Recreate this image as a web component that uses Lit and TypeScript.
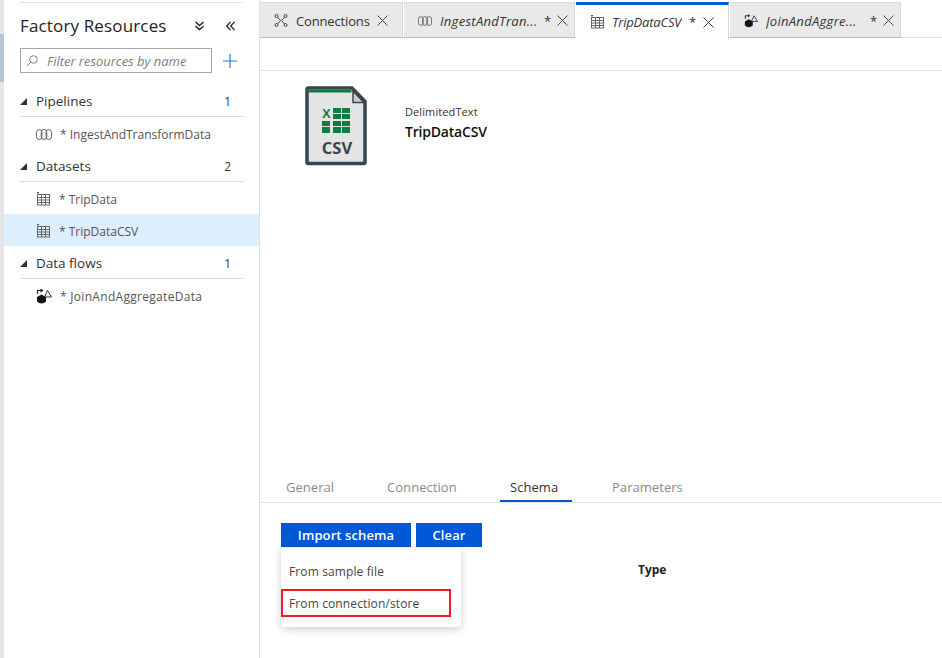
import { LitElement, html, css, svg } from 'lit';
import { customElement } from 'lit/decorators.js';

const pipelineIcon = (w = 16, h = 11) => svg`
  <svg class="icon" width=${w} height=${h} viewBox="0 0 16 11" fill="none" stroke="#666" stroke-width="1">
    <rect x="0.5" y="0.5" width="5.5" height="10" rx="2.750"/>
    <rect x="5.200" y="0.5" width="5.600" height="10" rx="2.750"/>
    <rect x="10" y="0.5" width="5.500" height="10" rx="2.750"/>
  </svg>`;

const tableIcon = () => svg`
  <svg class="icon" width="15" height="14" viewBox="0 0 15 14" fill="none" stroke="#666" stroke-width="1">
    <path d="M1 0.5h2M2 0v1.500" stroke="#555"/>
    <rect x="1.500" y="2.500" width="12" height="10.500"/>
    <path d="M1.500 5.500h12M1.500 8h12M1.500 10.500h12M5.500 2.500v10.500M9.500 2.500v10.500"/>
  </svg>`;

const flowIcon = (w = 16, h = 15) => svg`
  <svg class="icon" width=${w} height=${h} viewBox="0 0 16 15">
    <path d="M1 8 5.500 5.500 10 8V12.500Q5.500 16.500 1 12.500Z" fill="#111"/>
    <path d="M1.500 5V1.500H6M4.500 0 6.500 1.500 4.500 3" fill="none" stroke="#222" stroke-width="1.100"/>
    <path d="M11.500 1.500 15.500 8H8.500z" fill="none" stroke="#333" stroke-width="1"/>
  </svg>`;

const connectionsIcon = () => svg`
  <svg class="icon" width="14" height="13" viewBox="0 0 14 13" fill="none" stroke="#444" stroke-width="1">
    <circle cx="2.500" cy="2" r="1.500"/><circle cx="11.500" cy="2" r="1.500"/>
    <circle cx="2.500" cy="11" r="1.500"/><circle cx="11.500" cy="11" r="1.500"/>
    <path d="M3.700 3.200 6.500 6.500 3.700 9.800M10.300 3.200 7.500 6.500 10.300 9.800"/>
  </svg>`;

const closeIcon = () => svg`
  <svg class="close" width="11" height="11" viewBox="0 0 11 11" fill="none" stroke="#444" stroke-width="1">
    <path d="M0.500 0.500 10.500 10.500M10.500 0.500 0.500 10.500"/>
  </svg>`;

const csvIcon = () => svg`
  <svg width="62" height="80" viewBox="0 0 62 80">
    <path d="M3.500 2H47L60 15.500V76a1.500 1.500 0 0 1-1.500 1.500H3.500A1.500 1.500 0 0 1 2 76V3.500A1.500 1.500 0 0 1 3.500 2z" fill="#e4e4e4" stroke="#3a444e" stroke-width="3.500"/>
    <rect x="3.500" y="4" width="43" height="2.500" fill="#0f7b3f"/>
    <path d="M48 5V16.500H59z" fill="#c9cdd1" stroke="#3a444e" stroke-width="1.500"/>
    <text x="17" y="32" font-family="Liberation Sans" font-weight="700" font-size="13" fill="#107c41">X</text>
    <g fill="#107c41">
      <rect x="28" y="22" width="8" height="5"/><rect x="37" y="22" width="8" height="5"/>
      <rect x="28" y="28" width="8" height="5"/><rect x="37" y="28" width="8" height="5"/>
      <rect x="17" y="35" width="8" height="5"/><rect x="28" y="35" width="8" height="5"/><rect x="37" y="35" width="8" height="5"/>
      <rect x="17" y="41" width="8" height="6"/><rect x="28" y="41" width="8" height="6"/><rect x="37" y="41" width="8" height="6"/>
    </g>
    <text x="32" y="68" text-anchor="middle" font-family="Open Sans" font-weight="700" font-size="16.500" fill="#3a444e">CSV</text>
  </svg>`;

@customElement('app-root')
export class AppRoot extends LitElement {
  static styles = css`
    :host {
      display: flex;
      height: 658px;
      width: 942px;
      overflow: hidden;
      background: #fff;
      color: #333;
      font-family: "Open Sans", "Noto Sans", sans-serif;
      font-size: 12px;
    }
    .rail {
      width: 4px;
      flex: none;
      background: #e5e3e4;
      padding-top: 34px;
      box-sizing: border-box;
    }
    .rail div {
      height: 48px;
      background: #b5c5d3;
    }
    .side {
      width: 256px;
      flex: none;
      box-sizing: border-box;
      border-right: 1px solid #e1e1e1;
    }
    .side-head {
      margin: 2px 16px 0;
      border-top: 1px solid #e1e1e1;
      height: 46px;
      display: flex;
      align-items: center;
      justify-content: space-between;
      box-sizing: border-box;
      padding-right: 8px;
    }
    .title {
      font-size: 17px;
      color: #222;
      letter-spacing: 0.15px;
    }
    .head-icons {
      display: flex;
      gap: 22px;
    }
    .filter-row {
      display: flex;
      align-items: center;
      margin: 0 16px;
      gap: 11px;
    }
    .filter {
      width: 192px;
      height: 25px;
      box-sizing: border-box;
      border: 1px solid #a6a6a6;
      display: flex;
      align-items: center;
      gap: 9px;
      padding-left: 5px;
      font-style: italic;
      color: #808080;
      font-size: 13px;
      letter-spacing: -0.03px;
    }
    .group {
      margin: 0 16px;
      height: 33px;
      box-sizing: border-box;
      border-bottom: 1px solid #dcdcdc;
      display: flex;
      align-items: center;
      gap: 9px;
      font-weight: 500;
      font-size: 13.500px;
      color: #333;
      padding: 2px 12px 0 0;
    }
    .group .count {
      margin-left: auto;
      font-weight: 400;
      font-size: 12px;
    }
    .tri {
      width: 0;
      height: 0;
      border-left: 7px solid transparent;
      border-bottom: 7px solid #333;
    }
    .item {
      height: 32px;
      box-sizing: border-box;
      display: flex;
      align-items: center;
      padding: 2px 0 0 32px;
      color: #555;
    }
    .item.sel {
      background: #dcefff;
    }
    .item.wide {
      letter-spacing: 0.3px;
    }
    .item .icon {
      flex: none;
      margin-right: 8px;
    }
    .first-group {
      margin-top: 11px;
    }
    .main {
      flex: 1;
      display: flex;
      flex-direction: column;
      min-width: 0;
    }
    .tabs {
      height: 38px;
      box-sizing: border-box;
      padding-top: 2px;
      display: flex;
      border-bottom: 1px solid #dedede;
    }
    .tab {
      box-sizing: border-box;
      height: 36px;
      background: #e9e9e9;
      border-top: 1px solid #dcdcdc;
      border-right: 1px solid #d6d6d6;
      border-bottom: 1px solid #bdbdbd;
      margin-right: 1px;
      display: flex;
      align-items: center;
      padding: 1px 6px 0 14px;
      gap: 6px;
      white-space: nowrap;
      color: #333;
      font-size: 13px;
      letter-spacing: -0.15px;
    }
    .tab .icon {
      flex: none;
      margin-right: 2px;
    }
    .tab i {
      font-style: italic;
      overflow: hidden;
      flex: 1;
      letter-spacing: 0.3px;
    }
    .tab .close {
      flex: none;
      margin-left: auto;
    }
    .tab.active {
      background: #fff;
      border-top: 3px solid #0058d6;
      border-bottom: none;
      height: 37px;
      padding: 0 14px 0 14px;
      gap: 7px;
    }
    .tab.active .icon {
      margin-right: 0;
    }
    .tab.active i {
      letter-spacing: -0.2px;
    }
    .t1 { width: 143px; padding-right: 14px; }
    .t2 { width: 171px; }
    .t3 { width: 153px; }
    .t4 { width: 171px; }
    .toolbar {
      height: 33px;
      flex: none;
      box-sizing: border-box;
      border-bottom: 1px solid #e1e1e1;
    }
    .info {
      display: flex;
      padding: 15px 0 0 45px;
      gap: 38px;
      flex: 1;
    }
    .info-text {
      padding-top: 18px;
      display: flex;
      flex-direction: column;
      gap: 3px;
      color: #333;
      font-size: 11px;
      letter-spacing: 0.1px;
    }
    .info-text b {
      font-size: 14px;
      color: #111;
      font-weight: 600;
      letter-spacing: -0.2px;
    }
    .sub-tabs {
      height: 33px;
      box-sizing: border-box;
      border-bottom: 1px solid #e1e1e1;
      display: flex;
      flex: none;
      padding-left: 26px;
      font-size: 13px;
      color: #8a8a8a;
      margin-bottom: 20px;
      letter-spacing: 0.05px;
    }
    .sub-tabs span {
      padding-top: 8px;
      box-sizing: border-box;
      height: 32px;
    }
    .sub-tabs .general { width: 101px; }
    .sub-tabs .connection { width: 113px; }
    .sub-tabs .on {
      color: #333;
      width: 72px;
      margin-right: 40px;
      padding-left: 10px;
      border-bottom: 2px solid #0058d6;
    }
    .schema {
      height: 135px;
      flex: none;
      padding-left: 21px;
      position: relative;
    }
    .btns {
      display: flex;
      gap: 5px;
    }
    .btn {
      height: 24px;
      background: #0058d6;
      color: #fff;
      font-weight: 600;
      font-size: 13px;
      display: flex;
      align-items: center;
      justify-content: center;
      letter-spacing: 0.1px;
    }
    .import { width: 130px; }
    .clear { width: 66px; }
    .type {
      margin: 14px 0 0 357px;
      font-weight: 700;
      color: #222;
    }
    .menu {
      position: absolute;
      left: 21px;
      top: 25px;
      width: 180px;
      height: 79px;
      background: #fff;
      border-radius: 0 0 4px 4px;
      box-shadow: 0 2px 8px rgba(0, 0, 0, 0.2);
      padding-top: 8px;
      box-sizing: border-box;
    }
    .menu div {
      height: 32px;
      line-height: 32px;
      padding-left: 8px;
      box-sizing: border-box;
      color: #444;
      letter-spacing: 0.12px;
    }
    .menu .mark {
      width: 170px;
      height: 28px;
      line-height: 25px;
      margin-top: 1px;
      padding-left: 6px;
      border: 2px solid #ed1c24;
    }
  `;

  render() {
    return html`
      <div class="rail"><div></div></div>
      <div class="side">
        <div class="side-head">
          <span class="title">Factory Resources</span>
          <span class="head-icons">
            <svg width="9" height="10" viewBox="0 0 9 10" fill="none" stroke="#222" stroke-width="1.400">
              <path d="M0.500 1 4.500 4.500 8.500 1M0.500 5 4.500 8.500 8.500 5"/>
            </svg>
            <svg width="9" height="10" viewBox="0 0 9 10" fill="none" stroke="#222" stroke-width="1.200">
              <path d="M4.500 1 0.700 5 4.500 9M8.500 1 4.700 5 8.500 9"/>
            </svg>
          </span>
        </div>
        <div class="filter-row">
          <div class="filter">
            <svg width="12" height="12" viewBox="0 0 12 12" fill="none" stroke="#808080" stroke-width="1">
              <circle cx="7.500" cy="4.500" r="3.800"/><path d="M4.800 7.200 0.800 11.200"/>
            </svg>
            Filter resources by name
          </div>
          <svg width="14" height="14" viewBox="0 0 14 14" stroke="#2a7bd8" stroke-width="1.200">
            <path d="M7 0V14M0 7H14"/>
          </svg>
        </div>
        <div class="group first-group"><span class="tri"></span>Pipelines<span class="count">1</span></div>
        <div class="item">${pipelineIcon()}* IngestAndTransformData</div>
        <div class="group"><span class="tri"></span>Datasets<span class="count">2</span></div>
        <div class="item">${tableIcon()}* TripData</div>
        <div class="item sel">${tableIcon()}* TripDataCSV</div>
        <div class="group"><span class="tri"></span>Data flows<span class="count">1</span></div>
        <div class="item wide">${flowIcon()}* JoinAndAggregateData</div>
      </div>
      <div class="main">
        <div class="tabs">
          <div class="tab t1">${connectionsIcon()}<span>Connections</span>${closeIcon()}</div>
          <div class="tab t2">${pipelineIcon(14, 10)}<i>IngestAndTran...</i><span>*</span>${closeIcon()}</div>
          <div class="tab t3 active">${tableIcon()}<i>TripDataCSV</i><span>*</span>${closeIcon()}</div>
          <div class="tab t4">${flowIcon(14, 14)}<i>JoinAndAggre...</i><span>*</span>${closeIcon()}</div>
        </div>
        <div class="toolbar"></div>
        <div class="info">
          ${csvIcon()}
          <div class="info-text">
            <span>DelimitedText</span>
            <b>TripDataCSV</b>
          </div>
        </div>
        <div class="sub-tabs">
          <span class="general">General</span>
          <span class="connection">Connection</span>
          <span class="on">Schema</span>
          <span>Parameters</span>
        </div>
        <div class="schema">
          <div class="btns">
            <div class="btn import">Import schema</div>
            <div class="btn clear">Clear</div>
          </div>
          <div class="type">Type</div>
          <div class="menu">
            <div>From sample file</div>
            <div class="mark">From connection/store</div>
          </div>
        </div>
      </div>
    `;
  }
}
